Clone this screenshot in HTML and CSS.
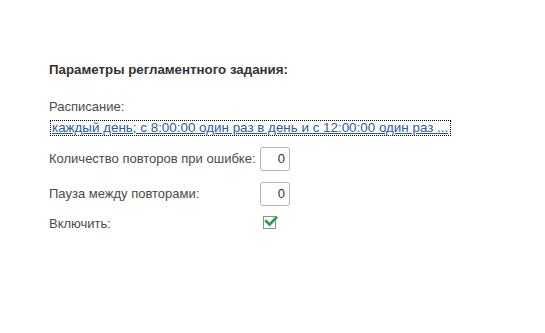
FILE: index.html
```html
<!DOCTYPE html>
<html lang="ru">
<head>
<meta charset="utf-8">
<title>Параметры регламентного задания</title>
<link rel="stylesheet" href="styles.css">
</head>
<body>
<div class="form">
  <h1 class="title">Параметры регламентного задания:</h1>
  <div class="schedule">
    <div class="label">Расписание:</div>
    <div class="link-box"><a class="link" href="#">каждый день; с 8:00:00 один раз в день и с 12:00:00 один раз ...</a></div>
  </div>
  <div class="grid">
    <div class="label">Количество повторов при ошибке:</div>
    <div class="field">0</div>
    <div class="label">Пауза между повторами:</div>
    <div class="field">0</div>
    <div class="label last">Включить:</div>
    <div class="check">
      <svg class="mark" width="16" height="14" viewBox="0 0 16 14"><path d="M3.2 5.2 L6.6 8.6 L13.2 1.6" fill="none" stroke="#1ea04a" stroke-width="2.6" stroke-linecap="square"/></svg>
    </div>
  </div>
</div>
</body>
</html>
```
FILE: styles.css
```css
html, body {
  margin: 0;
  padding: 0;
  background: #ffffff;
}
body {
  font-family: Arial, "Liberation Sans", sans-serif;
  font-size: 13px;
  line-height: 16px;
  color: #4a4a4a;
}
.form {
  padding: 62px 0 0 49px;
}
.title {
  margin: 0;
  font-size: 13.3px;
  line-height: 16px;
  font-weight: bold;
  color: #333333;
}
.schedule {
  margin-top: 21px;
}
.link-box {
  margin-top: 5px;
  margin-left: 1px;
  width: 399px;
  height: 14px;
  border: 1px dotted #000000;
  white-space: nowrap;
  overflow: hidden;
}
.link {
  display: block;
  margin-top: -1px;
  padding-left: 1px;
  font-size: 13.4px;
  color: #2a5caa;
  text-decoration: underline;
}
.grid {
  margin-top: 11px;
  display: grid;
  grid-template-columns: 211px 30px;
  grid-template-rows: 24px 24px 16px;
  row-gap: 11px;
  align-items: center;
}
.label.last {
  align-self: start;
  margin-top: -1px;
}
.field {
  box-sizing: border-box;
  height: 24px;
  border: 1px solid #b4b4b4;
  border-radius: 3px;
  text-align: right;
  padding-right: 4px;
  line-height: 22px;
  color: #333333;
}
.check {
  position: relative;
  align-self: start;
  box-sizing: border-box;
  width: 13px;
  height: 13px;
  margin-left: 3px;
  margin-top: -1px;
  border: 1px solid #8c8c8c;
  background: #ffffff;
}
.mark {
  position: absolute;
  left: -1px;
  top: -1px;
}
```
